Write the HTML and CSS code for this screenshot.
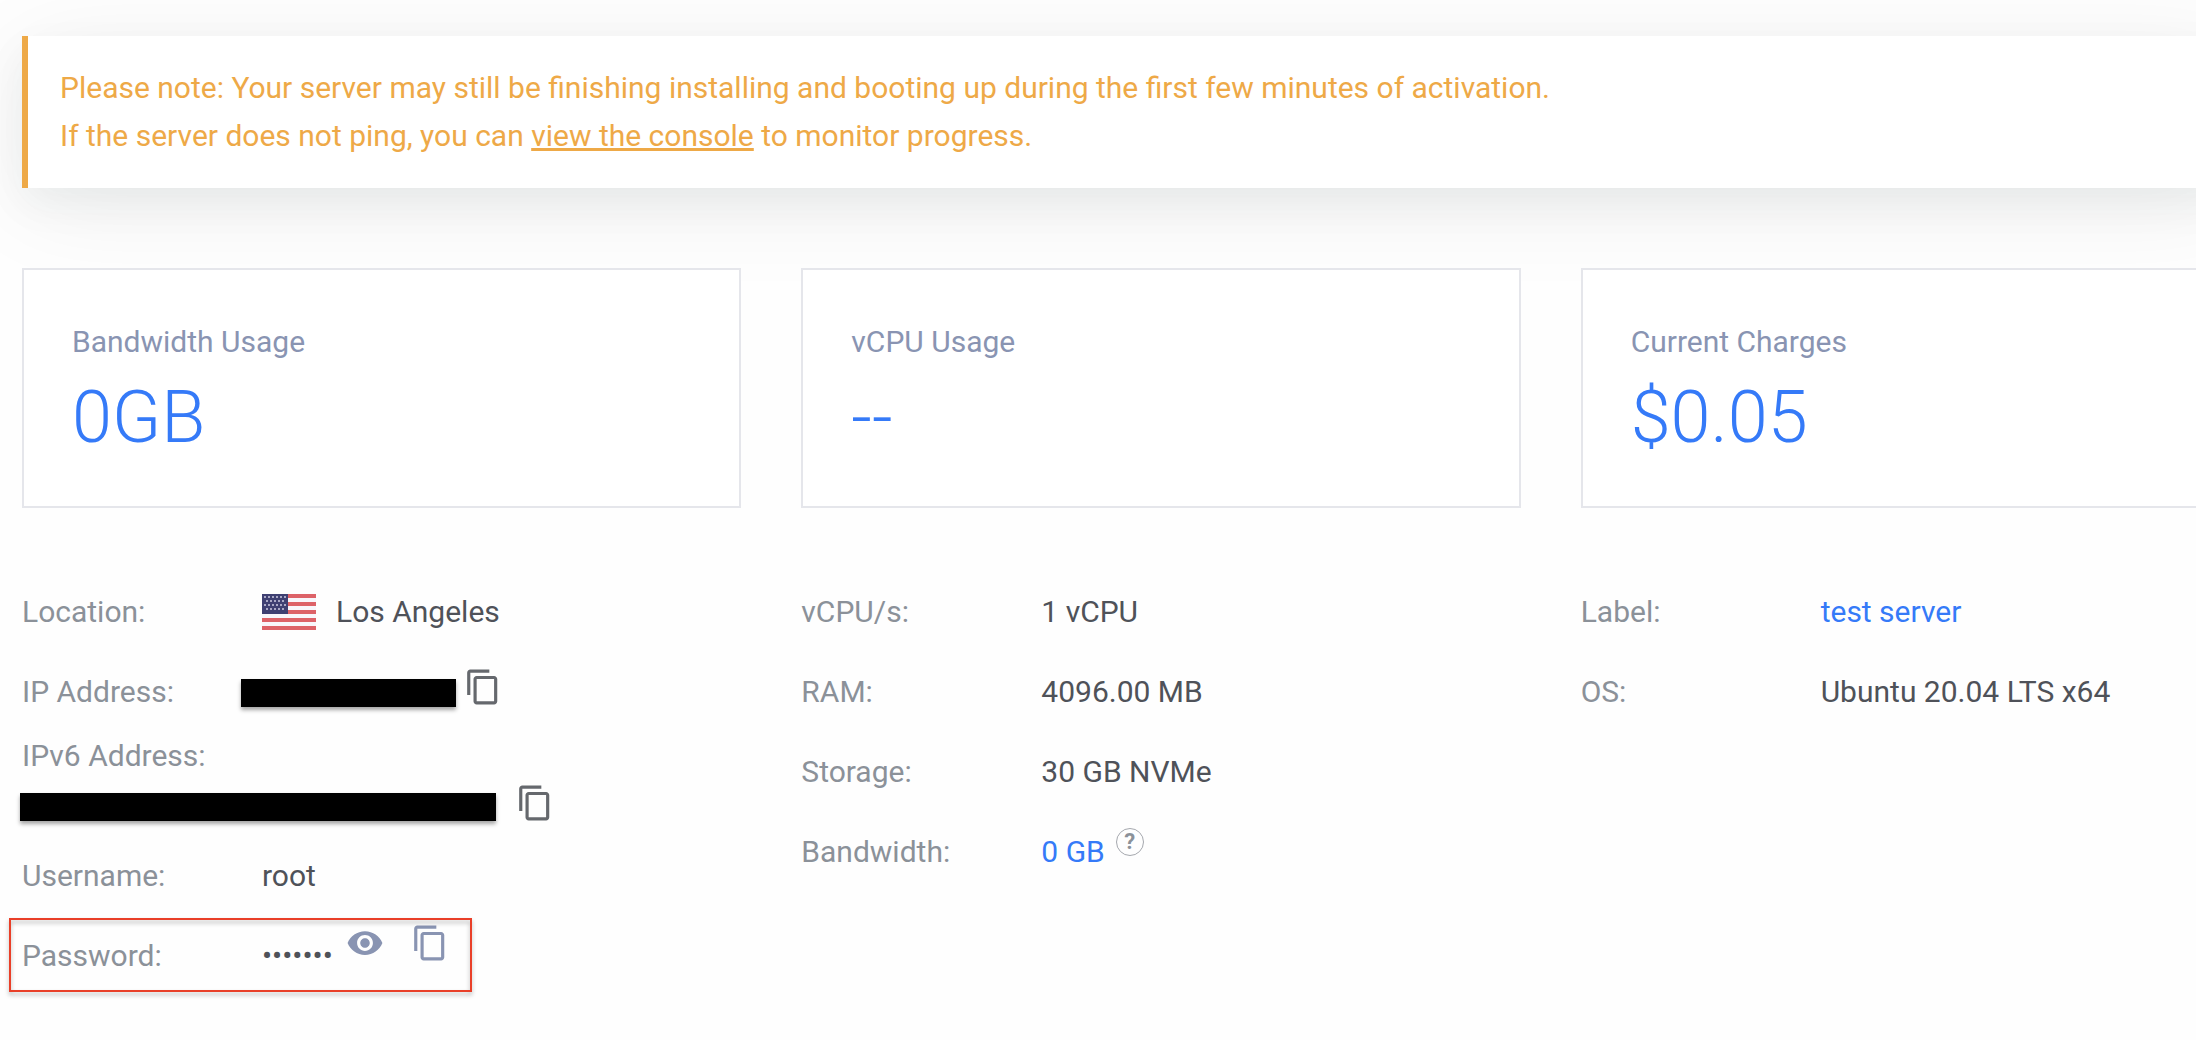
FILE: index.html
```html
<!DOCTYPE html>
<html lang="en">
<head>
<meta charset="utf-8">
<meta name="viewport" content="width=device-width, initial-scale=1">
<title>Server details</title>
<link rel="stylesheet" href="styles.css">
</head>
<body>
<svg width="0" height="0" class="sprite" aria-hidden="true">
  <symbol id="copy" viewBox="0 0 24 24"><path d="M16 1H4c-1.1 0-2 .9-2 2v14h2V3h12V1zm3 4H8c-1.1 0-2 .9-2 2v14c0 1.1.9 2 2 2h11c1.1 0 2-.9 2-2V7c0-1.1-.9-2-2-2zm0 16H8V7h11v14z"/></symbol>
  <symbol id="eye" viewBox="0 0 24 24"><path d="M12 4.500C7 4.500 2.730 7.610 1 12c1.730 4.390 6 7.500 11 7.500s9.270-3.110 11-7.500c-1.730-4.390-6-7.500-11-7.500zM12 17c-2.760 0-5-2.240-5-5s2.240-5 5-5 5 2.240 5 5-2.240 5-5 5zm0-8c-1.660 0-3 1.340-3 3s1.340 3 3 3 3-1.340 3-3-1.340-3-3-3z"/></symbol>
</svg>
<main class="page">
  <section class="notice">
    <p>Please note: Your server may still be finishing installing and booting up during the first few minutes of activation.<br>If the server does not ping, you can <a href="#console">view the console</a> to monitor progress.</p>
  </section>

  <section class="columns stats">
    <article class="card"><h2 class="card-title">Bandwidth Usage</h2><p class="card-value">0GB</p></article>
    <article class="card"><h2 class="card-title">vCPU Usage</h2><p class="card-value">--</p></article>
    <article class="card"><h2 class="card-title">Current Charges</h2><p class="card-value">$0.05</p></article>
  </section>

  <section class="columns">
    <dl class="details">
      <div class="row">
        <dt>Location:</dt>
        <dd>
          <svg class="flag" viewBox="0 0 54 36" aria-hidden="true">
            <path fill="#f8f6fb" d="M0 0h54v36H0z"/>
            <path stroke="#dd6268" stroke-width="4" d="M0 2h54M0 10h54M0 18h54M0 26h54M0 34h54"/>
            <path fill="#3f4072" d="M0 0h26v20H0z"/>
            <path stroke="#aaa9c6" stroke-width="2" stroke-dasharray="2 2" d="M2 3h22M4 7h18M2 11h22M4 15h18"/>
          </svg>
          Los Angeles
        </dd>
      </div>
      <div class="row row-ip">
        <dt>IP Address:</dt>
        <dd><span class="redacted redacted-short"></span><button class="icon-btn raised" aria-label="Copy IP address"><svg><use href="#copy"/></svg></button></dd>
      </div>
      <div class="row row-ipv6">
        <dt>IPv6 Address:</dt>
        <dd><span class="redacted redacted-long"></span><button class="icon-btn" aria-label="Copy IPv6 address"><svg><use href="#copy"/></svg></button></dd>
      </div>
      <div class="row"><dt>Username:</dt><dd>root</dd></div>
      <div class="row row-password">
        <dt>Password:</dt>
        <dd>•••••••<span class="actions"><button class="icon-btn muted" aria-label="Show password"><svg><use href="#eye"/></svg></button><button class="icon-btn muted" aria-label="Copy password"><svg><use href="#copy"/></svg></button></span></dd>
      </div>
    </dl>
    <dl class="details">
      <div class="row"><dt>vCPU/s:</dt><dd>1 vCPU</dd></div>
      <div class="row"><dt>RAM:</dt><dd>4096.00 MB</dd></div>
      <div class="row"><dt>Storage:</dt><dd>30 GB NVMe</dd></div>
      <div class="row"><dt>Bandwidth:</dt><dd><a href="#bandwidth">0 GB</a><button class="help" aria-label="About bandwidth">?</button></dd></div>
    </dl>
    <dl class="details">
      <div class="row"><dt>Label:</dt><dd><a href="#label">test server</a></dd></div>
      <div class="row"><dt>OS:</dt><dd>Ubuntu 20.04 LTS x64</dd></div>
    </dl>
  </section>
</main>
</body>
</html>
```
FILE: styles.css
```css
*, *::before { box-sizing: border-box; }

body {
  margin: 0;
  background: #fefefe;
  color: #4f5259;
  font: 30px/48px Roboto, "Liberation Sans", sans-serif;
}

p, h2, dl, dd { margin: 0; }

a { color: #357af8; text-decoration: none; }

button {
  padding: 0;
  border: 0;
  background: none;
  color: inherit;
  font: inherit;
}

.sprite { position: absolute; }

.page {
  overflow: hidden;
  min-height: 100vh;
  padding: 36px 0 44px 22px;
}

.notice {
  margin-right: -40px;
  padding: 28px 32px;
  border-left: 6px solid #eea947;
  background: #fff;
  box-shadow: 0 16px 40px rgba(20, 50, 50, 0.05), 0 16px 100px rgba(0, 0, 0, 0.07);
  color: #eea947;
}

.notice a {
  color: inherit;
  text-decoration: underline;
  text-decoration-thickness: 3px;
}

/* The third column runs past the right edge of the viewport. */
.columns {
  display: grid;
  grid-template-columns: repeat(3, minmax(0, 1fr));
  gap: 60px;
  margin: 80px -104px 0 0;
}

.card {
  padding: 48px 48px 46px;
  border: 2px solid #e5e6eb;
  background: #fff;
}

.card-title {
  color: #8994b2;
  font-size: 30px;
  font-weight: 400;
}

.card-value {
  margin-top: 10px;
  color: #357af8;
  font-size: 72px;
  font-weight: 300;
  line-height: 84px;
}

.details {
  display: flex;
  flex-direction: column;
  gap: 32px;
}

.row {
  display: flex;
  min-height: 48px;
}

dt {
  flex: none;
  width: 240px;
  color: #8b9199;
}

dd {
  display: flex;
  align-items: center;
}

.flag {
  width: 54px;
  height: 36px;
  margin-right: 20px;
}

.redacted {
  height: 28px;
  background: #000;
  box-shadow: 0 3px 4px rgba(0, 0, 0, 0.35);
}

.redacted-short { width: 215px; margin-top: 2px; }
.redacted-long { width: 476px; margin-top: 8px; }

.icon-btn { display: block; height: 38px; }

.icon-btn svg {
  display: block;
  width: 38px;
  height: 38px;
  fill: #65686d;
}

.icon-btn.muted svg { fill: #8994b2; }

.row-ip dt { width: 219px; }
.row-ip dd { gap: 8px; }
.raised { align-self: flex-start; }

.row-ipv6 {
  flex-direction: column;
  gap: 4px;
  margin: -16px 0 -2px;
}

.row-ipv6 dd { gap: 20px; height: 38px; margin-left: -2px; }

.row-password { position: relative; }

.actions {
  display: flex;
  align-self: flex-start;
  gap: 27px;
  margin: -8px 0 0 13px;
}

/* Highlight frame drawn over the password row. */
.row-password::before {
  content: "";
  position: absolute;
  top: -14px;
  left: -13px;
  width: 463px;
  height: 74px;
  border: 2px solid #e93f28;
  filter: drop-shadow(0 3px 2px rgba(0, 0, 0, 0.3));
  pointer-events: none;
}

.help {
  align-self: flex-start;
  width: 28px;
  height: 28px;
  margin-left: 11px;
  border: 1px solid #a5a8ae;
  border-radius: 50%;
  color: #8b9199;
  font-size: 22px;
  font-weight: 700;
  line-height: 26px;
}
```
